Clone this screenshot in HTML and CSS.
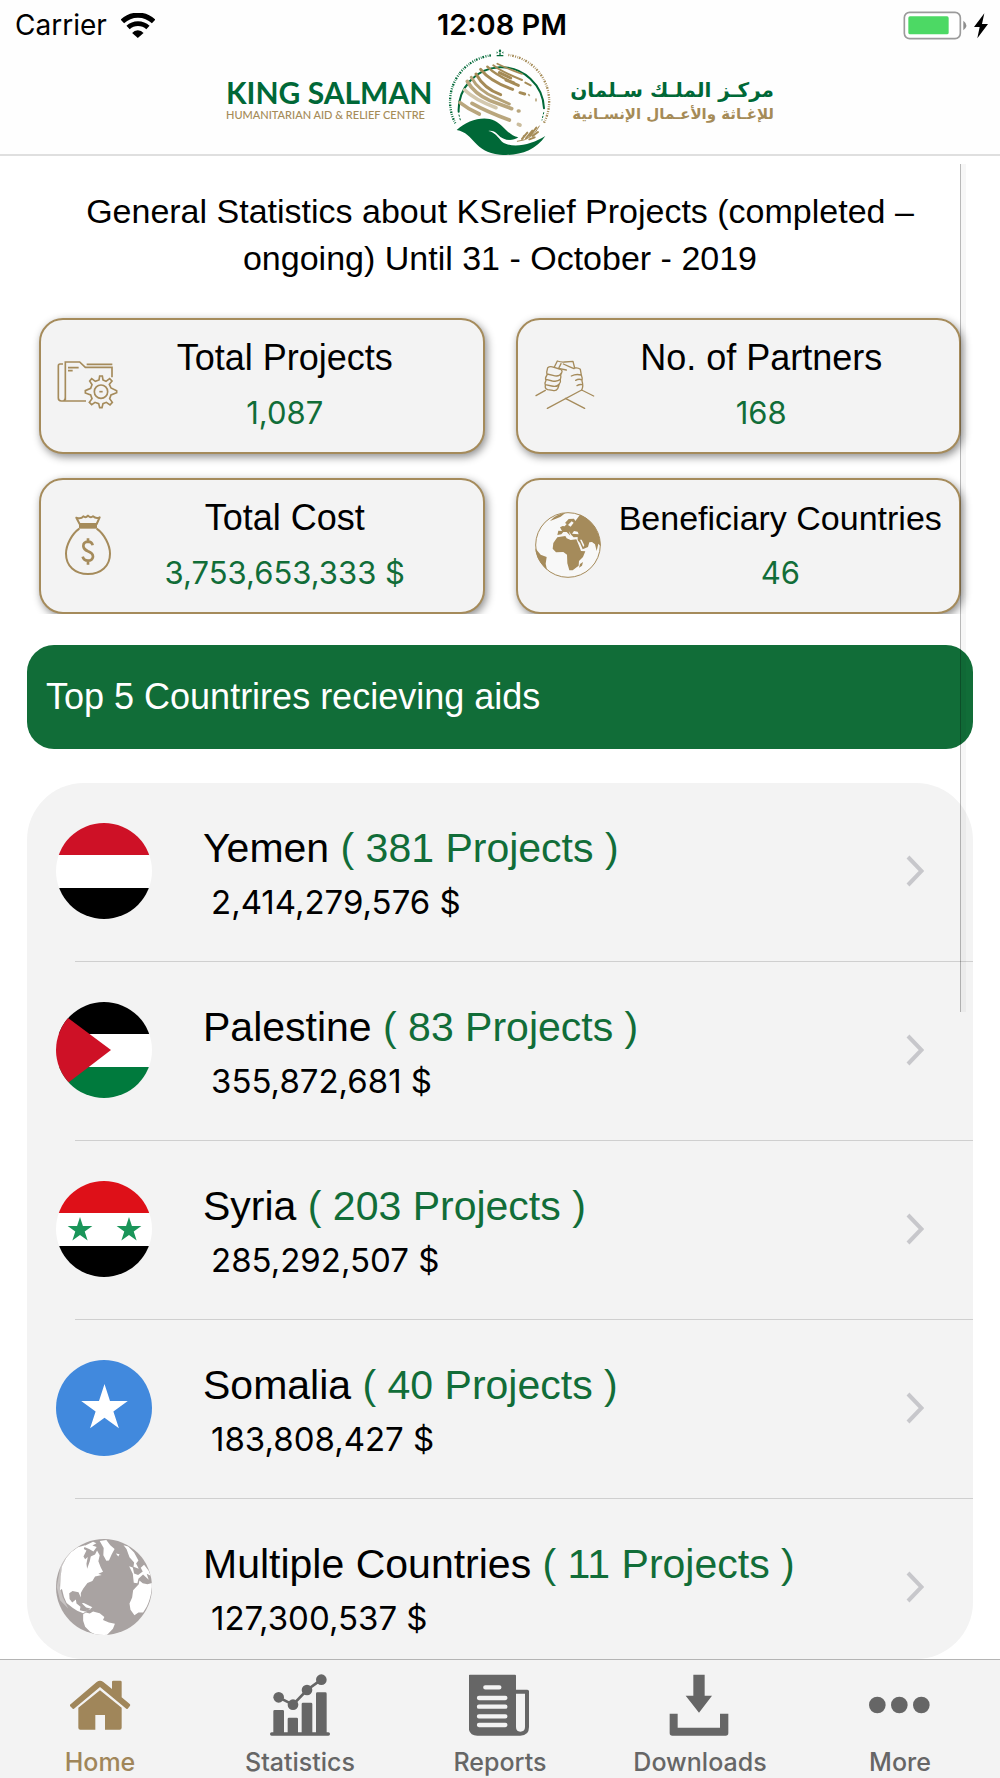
FILE: index.html
```html
<!DOCTYPE html>
<html lang="en">
<head>
<meta charset="utf-8">
<meta name="viewport" content="width=device-width, initial-scale=1">
<title>KSrelief Statistics</title>
<link rel="stylesheet" href="styles.css">
</head>
<body>
<svg class="defs" aria-hidden="true">
  <symbol id="star" viewBox="-10 -10 20 20"><path d="M0-10 2.25-3.09 9.51-3.09 3.63 1.18 5.88 8.09 0 3.82-5.88 8.09-3.63 1.18-9.51-3.09-2.25-3.09Z"/></symbol>
  <symbol id="chevron" viewBox="0 0 18 32"><path d="M2 2 15.500 16 2 30" fill="none" stroke="#c7c7cb" stroke-width="4"/></symbol>
</svg>
<div class="app">
  <header class="header">
    <div class="status">
      <div class="status-left">
        <span>Carrier</span>
        <svg width="34" height="25" viewBox="363 35 101 74">
          <path d="M367 60A67 67 0 0 1 460 60" fill="none" stroke="#000" stroke-width="15"/>
          <path d="M384 78A43 43 0 0 1 443 78" fill="none" stroke="#000" stroke-width="14"/>
          <path d="M413 109 396 94A22 22 0 0 1 430 94Z"/>
        </svg>
      </div>
      <div class="status-time">12:08 PM</div>
      <div class="status-right">
        <svg width="86" height="29" viewBox="1208 29 258 87">
          <rect x="1212" y="33" width="168" height="79" rx="16" fill="#fff" stroke="#9b9b9b" stroke-width="5"/>
          <rect x="1224" y="45" width="121" height="54" rx="5" fill="#4cd964"/>
          <path d="M1389 58Q1407 72 1389 87Z" fill="#8e8e8e"/>
          <path d="M1452 36 1421 77 1438 77 1431 111 1463 68 1445 68Z"/>
        </svg>
      </div>
    </div>
    <div class="brand">
      <div class="brand-text">
        <div class="brand-name">KING SALMAN</div>
        <div class="brand-sub">HUMANITARIAN AID &amp; RELIEF CENTRE</div>
      </div>
      <svg class="emblem" viewBox="30 24 300 318">
        <g fill="none" stroke-linecap="round">
          <path d="M46 250A140 140 0 0 1 156 46" stroke="#006837" stroke-width="7" stroke-dasharray="3 4 2 3 5 4" stroke-linecap="butt"/>
          <path d="M205 45A140 140 0 0 1 312 248" stroke="#a58b57" stroke-width="7" stroke-dasharray="3 4 2 3 5 4" stroke-linecap="butt"/>
          <path d="M56 215A128 128 0 0 1 312 205" stroke="#006837" stroke-width="6"/>
          <path d="M57 225 61 240M311 218 306 240" stroke="#006837" stroke-width="3" stroke-dasharray="4 7"/>
          <g stroke="#a58b57" stroke-width="9">
            <path d="M122 88Q150 124 218 148M240 158 254 162"/>
            <path d="M142 80Q170 108 222 128" stroke-width="7"/>
            <path d="M160 76Q185 96 246 120M256 128 272 136" stroke-width="6"/>
            <path d="M172 71Q205 87 246 102" stroke-width="5"/>
            <path d="M108 102Q132 146 182 164"/>
            <path d="M94 112Q115 152 168 174L208 192" stroke="#b5a277"/>
            <path d="M178 98 212 114M198 120 235 136"/>
          </g>
          <g stroke="#b9a67d" stroke-width="11">
            <path d="M82 124Q102 160 150 182L215 206M235 213 237 213"/>
            <path d="M74 150Q105 180 168 203" stroke="#d3c8ae"/>
            <path d="M96 190Q140 215 208 240"/>
            <path d="M60 188Q85 208 118 222"/>
            <path d="M235 253 240 255" stroke="#cbbd9e"/>
            <path d="M266 164 268 166M288 177 288 182" stroke-width="5"/>
          </g>
          <path d="M232 304Q278 300 298 258" stroke="#a58b57" stroke-width="3"/>
          <path d="M246 297 262 278M258 295 277 272M270 288 289 263M257 284 251 289M278 288 294 276M268 298 284 292" stroke="#a58b57" stroke-width="6"/>
        </g>
        <path d="M50 270C82 240 132 226 164 242 191 256 205 286 235 292 214 306 188 300 174 284 163 272 152 271 145 273 164 276 174 292 186 305 218 328 276 313 316 288 286 334 230 349 180 344 100 337 105 280 50 270Z" fill="#006837"/>
        <path d="M180 27 184 33 180 39 176 33ZM178 39H182V46H178ZM170 45 190 45 190 49 170 49ZM170 34 174 38 170 41ZM190 34 186 38 190 41Z" fill="#006837"/>
      </svg>
      <div class="brand-text" lang="ar" dir="rtl">
        <div class="brand-name-ar">مركـز الملـك سـلمان</div>
        <div class="brand-sub-ar">للإغـاثة والأعـمال الإنسـانية</div>
      </div>
    </div>
  </header>

  <main class="content">
    <h1 class="title">General Statistics about KSrelief Projects (completed – ongoing) Until 31 - October - 2019</h1>

    <section class="stats">
      <div class="stat">
        <div class="stat-icon">
          <svg width="62" height="50" viewBox="85 158 186 150" fill="none" stroke="#a58b5b" stroke-width="5">
            <path d="M103 170H94Q89 170 89 176V272Q89 281 98 281H172M110 278V164H153L170 180H250V210M174 171H251M118 181H150M118 190H132M110 270Q110 280 104 281"/>
            <path d="M211 218 213 206H221L223 218 232 222 243 214 250 221 242 231 247 242 264 250V256L247 263 243 274 251 285 244 293 233 285 223 289 220 301H213L210 289 199 285 189 292 182 285 190 274 186 263 170 257V250L186 243 190 232 183 221 189 214 200 222Z"/>
            <circle cx="217" cy="253" r="20"/><path d="M212 253H222"/>
          </svg>
        </div>
        <div class="stat-text"><div class="stat-label">Total Projects</div><div class="stat-value">1,087</div></div>
      </div>
      <div class="stat">
        <div class="stat-icon">
          <svg width="60" height="52" viewBox="111 150 180 156" fill="none" stroke="#a58b5b" stroke-width="4" stroke-linecap="round" stroke-linejoin="round">
            <path d="M114 260 142 244M148 298 251 243 287 261M202 268 260 298"/>
            <path d="M149 176Q156 170 168 175L185 180Q195 184 191 191L188 198Q190 206 187 211 189 219 184 224 182 233 179 239 174 247 164 244L149 242Q140 239 142 229 139 222 144 214 140 207 147 198 145 188 149 176ZM147 195 165 199Q184 205 190 192M144 211 163 216Q179 219 187 211M142 227 161 231Q177 235 184 225"/>
            <path d="M169 174 178 156Q188 160 200 159L225 157 230 177Q240 175 247 181L250 198Q254 207 252 216 257 231 251 243M189 164 182 178 205 183M196 165 212 172 228 179M220 201Q234 194 249 198M233 214Q243 208 252 213M237 230Q245 225 253 227"/>
          </svg>
        </div>
        <div class="stat-text"><div class="stat-label">No. of Partners</div><div class="stat-value">168</div></div>
      </div>
      <div class="stat">
        <div class="stat-icon">
          <svg width="48" height="62" viewBox="99 612 144 186" fill="none" stroke="#a58b5b" stroke-width="6" stroke-linejoin="round">
            <path d="M146 642 136 623Q150 628 157 619 164 625 171 617 179 625 186 619 195 627 206 622L197 642Z"/>
            <path d="M144 650H198" stroke-width="12"/>
            <path d="M145 656C122 672 105 706 105 731 105 768 132 792 171 792S237 768 237 731C237 706 220 672 197 656"/>
            <path d="M185 706Q183 695 171 695 157 696 157 708 158 718 171 724 186 730 186 740 184 752 171 752 158 752 155 740M171 685V696M171 751V764" stroke-width="8"/>
          </svg>
        </div>
        <div class="stat-text"><div class="stat-label">Total Cost</div><div class="stat-value">3,753,653,333 $</div></div>
      </div>
      <div class="stat stat-wide">
        <div class="stat-icon">
          <svg width="66" height="66" viewBox="105 607 198 198" fill="#a58b5b">
            <circle cx="204" cy="706" r="97" fill="#f8f8f8" stroke="#a58b5b" stroke-width="3"/>
            <path d="M160 700 172 683 196 679 200 686 212 691 229 689 237 708 243 724 256 725 249 742 237 754 236 768 218 782 208 782 202 761 201 735 190 727 168 728 158 717Z"/>
            <path d="M172 676 175 663 186 664 180 653 188 649 194 650 200 643 195 640 206 628 222 627 226 634 240 615C270 627 301 660 302 710L295 702 290 724 285 704 276 697 268 698 264 712 248 719 240 700 233 692 233 682 221 683 214 676 206 664 211 678 200 667 190 667 184 674Z"/>
            <path d="M204 646 212 651 221 639 215 635ZM216 672 236 674 233 666 222 664ZM240 690 250 712 253 707 245 690Z" fill="#f8f8f8"/>
            <path d="M106 716 122 735 140 742 137 762 141 780C120 762 107 740 106 716ZM150 634C165 618 180 612 196 610L182 621 166 628ZM237 774 240 763 249 757 246 768Z"/>
          </svg>
        </div>
        <div class="stat-text"><div class="stat-label">Beneficiary Countries</div><div class="stat-value">46</div></div>
      </div>
    </section>

    <h2 class="banner">Top 5 Countrires recieving aids</h2>

    <ul class="countries">
      <li><a class="country" href="#yemen">
        <svg class="flag" viewBox="0 0 96 96"><path d="M0 0H96V32H0Z" fill="#ce1126"/><path d="M0 32H96V65H0Z" fill="#fff"/><path d="M0 65H96V96H0Z"/></svg>
        <div class="country-text"><div class="country-name">Yemen <span>( 381 Projects )</span></div><div class="country-amount">2,414,279,576 $</div></div>
        <svg class="chevron"><use href="#chevron"/></svg></a></li>
      <li><a class="country" href="#palestine">
        <svg class="flag" viewBox="0 0 96 96"><path d="M0 0H96V32H0Z"/><path d="M0 32H96V65H0Z" fill="#fff"/><path d="M0 65H96V96H0Z" fill="#007a3d"/><path d="M-10 0 0 7 55 48 0 90Z" fill="#ce1126"/></svg>
        <div class="country-text"><div class="country-name">Palestine <span>( 83 Projects )</span></div><div class="country-amount">355,872,681 $</div></div>
        <svg class="chevron"><use href="#chevron"/></svg></a></li>
      <li><a class="country" href="#syria">
        <svg class="flag" viewBox="0 0 96 96"><path d="M0 0H96V32H0Z" fill="#de1018"/><path d="M0 32H96V65H0Z" fill="#fff"/><path d="M0 65H96V96H0Z"/><g fill="#1a9559"><use href="#star" x="11" y="36" width="26" height="26"/><use href="#star" x="60" y="36" width="26" height="26"/></g></svg>
        <div class="country-text"><div class="country-name">Syria <span>( 203 Projects )</span></div><div class="country-amount">285,292,507 $</div></div>
        <svg class="chevron"><use href="#chevron"/></svg></a></li>
      <li><a class="country" href="#somalia">
        <svg class="flag" viewBox="0 0 96 96"><path d="M0 0H96V96H0Z" fill="#4189dd"/><use href="#star" x="24" y="24" width="49" height="49" fill="#fff"/></svg>
        <div class="country-text"><div class="country-name">Somalia <span>( 40 Projects )</span></div><div class="country-amount">183,808,427 $</div></div>
        <svg class="chevron"><use href="#chevron"/></svg></a></li>
      <li><a class="country" href="#multiple">
        <svg class="flag" viewBox="108 1135 290 290"><path d="M108 1135H398V1425H108Z" fill="#a9a3a2"/>
          <g fill="#fff">
            <path d="M154 1174 174 1160 196 1154 192 1165 200 1170 191 1188 196 1196 204 1189 200 1210 202 1225 210 1202 213 1188 226 1182 232 1170 240 1184 236 1202 243 1220 250 1234 236 1240 246 1244 226 1248 218 1262 203 1268 190 1285 183 1298 183 1312 176 1296 158 1292 148 1299 149 1316 157 1327 168 1318 170 1330 182 1340 180 1350 196 1354 215 1346 199 1342 186 1329 192 1328 218 1341 208 1348 190 1359 172 1352 158 1343 140 1328 132 1310 126 1286 120 1290 122 1248 126 1218 139 1192Z"/>
            <path d="M240 1141 260 1138 272 1154 285 1165 276 1182 268 1200 260 1201 251 1184 252 1162ZM190 1158 220 1143 230 1148 218 1155 231 1159 221 1173 208 1165ZM289 1179 300 1181 296 1188Z"/>
            <path d="M190 1362 198 1357 210 1360 220 1354 240 1359 254 1371 250 1380 268 1387 286 1391 280 1406 262 1425H230L212 1416 196 1400 190 1382Z"/>
            <path d="M398 1268C398 1303 388 1335 371 1357L357 1357 345 1365 333 1349 330 1330 338 1312 341 1290 358 1272 360 1260 370 1269 384 1272Z"/>
            <path d="M312 1154 326 1158 344 1176 357 1200 350 1209 358 1225 342 1219 344 1206 330 1190 321 1165ZM329 1217 340 1221 344 1239 356 1244 370 1233 364 1222 374 1213 388 1231 394 1246 382 1240 388 1258 371 1242 357 1255 354 1269 343 1267 340 1240Z"/>
            <path d="M122 1215 139 1189 124 1230 119 1276 128 1310 145 1345 120 1320 110 1280Z" opacity=".35"/>
          </g></svg>
        <div class="country-text"><div class="country-name">Multiple Countries <span>( 11 Projects )</span></div><div class="country-amount">127,300,537 $</div></div>
        <svg class="chevron"><use href="#chevron"/></svg></a></li>
    </ul>
    <div class="scroll-indicator"></div>
  </main>

  <nav class="tabs">
    <a class="tab tab-active" href="#home">
      <svg viewBox="208 73 186 186" fill="currentColor"><path d="M211 165 291 97Q301 89 311 97L337 118V97Q337 93 341 93H362Q366 93 366 97V143L391 164Q393 167 390 170L384 177Q381 179 378 176L301 112 223 177Q220 179 217 175L211 169Z"/><path d="M236 174 301 122 366 174V234Q366 240 360 240H316V196H287V240H242Q236 240 236 234Z"/></svg>
      <span>Home</span></a>
    <a class="tab" href="#statistics">
      <svg viewBox="807 73 186 186" fill="currentColor"><rect x="810" y="248" width="180" height="10" rx="5"/><path d="M820 250V185Q820 181 824 181H848Q852 181 852 185V250ZM863 250V208Q863 204 867 204H890Q894 204 894 208V250ZM905 250V163Q905 159 909 159H933Q937 159 937 163V250ZM948 250V132Q948 128 952 128H976Q980 128 980 132V250Z"/><path d="M836 143 879 165 921 121 964 90" fill="none" stroke="currentColor" stroke-width="8"/><circle cx="836" cy="143" r="16"/><circle cx="879" cy="165" r="16"/><circle cx="921" cy="121" r="16"/><circle cx="964" cy="90" r="16"/></svg>
      <span>Statistics</span></a>
    <a class="tab" href="#reports">
      <svg viewBox="1407 73 186 186" fill="currentColor"><path fill-rule="evenodd" d="M1410 75H1545Q1548 75 1548 78V120H1582Q1587 120 1587 125V232Q1587 258 1561 258H1432Q1406 258 1406 232V79Q1406 75 1410 75ZM1548 132V232Q1548 246 1561 246 1575 246 1575 232V132Z"/><path d="M1456 113H1498M1437 145H1516M1437 171H1516M1437 200H1516M1437 226H1516" stroke="#f3f3f3" stroke-width="13" stroke-linecap="round"/></svg>
      <span>Reports</span></a>
    <a class="tab" href="#downloads">
      <svg viewBox="508 73 186 186" fill="currentColor"><path d="M581 75H615V138H637L598 189 558 138H581ZM510 192H534V234H661V192H686V250Q686 258 678 258H518Q510 258 510 250Z"/></svg>
      <span>Downloads</span></a>
    <a class="tab" href="#more">
      <svg viewBox="1106 73 186 186" fill="currentColor"><circle cx="1131" cy="166" r="25"/><circle cx="1197" cy="166" r="25"/><circle cx="1263" cy="166" r="25"/></svg>
      <span>More</span></a>
  </nav>
</div>
</body>
</html>
```
FILE: styles.css
```css
* {
  box-sizing: border-box;
}

body {
  margin: 0;
  background: #fff;
  color: #000;
  font-family: "Liberation Sans", Arial, sans-serif;
}

svg {
  display: block;
  flex: none;
}

a {
  color: inherit;
  text-decoration: none;
}

.defs {
  display: none;
}

.app {
  display: flex;
  flex-direction: column;
  height: 100vh;
}

/* Header */
.header {
  flex: none;
  background: #fefefe;
  border-bottom: 2px solid #dfdfdf;
}

.status {
  display: grid;
  grid-template-columns: 1fr auto 1fr;
  align-items: center;
  height: 48px;
  padding: 2px 11px 0 15px;
  font-family: Inter, sans-serif;
  font-size: 28px;
  line-height: 32px;
}

.status-left {
  display: flex;
  align-items: center;
  gap: 14px;
}

.status-time {
  font-size: 29px;
  font-weight: 600;
}

.status-right {
  justify-self: end;
}

.brand {
  display: flex;
  justify-content: center;
  gap: 24px;
}

.brand-text {
  display: flex;
  flex-direction: column;
  width: 200px;
  padding-top: 28px;
  white-space: nowrap;
}

.brand-name,
.brand-sub {
  font-family: Lato, sans-serif;
}

.brand-name {
  color: #006837;
  font-size: 30px;
  font-weight: 700;
  line-height: 32px;
}

.brand-sub {
  color: #a58b57;
  font-size: 11px;
  font-weight: 500;
  line-height: 14px;
}

.brand-name-ar,
.brand-sub-ar {
  font-family: "DejaVu Sans", sans-serif;
  font-weight: 700;
}

.brand-name-ar {
  color: #006837;
  font-size: 20px;
  line-height: 28px;
}

.brand-sub-ar {
  color: #a58b57;
  font-size: 15px;
  line-height: 20px;
}

.emblem {
  width: 100px;
  height: 106px;
  overflow: visible;
}

/* Content */
.content {
  position: relative;
  display: flex;
  flex: 1;
  flex-direction: column;
  min-height: 0;
  padding: 32px 27px 0;
  overflow: hidden;
}

.title {
  margin: 0 40px;
  font-size: 34px;
  font-weight: 400;
  line-height: 47px;
  text-align: center;
}

.stats {
  display: grid;
  flex: none;
  grid-template-columns: repeat(2, minmax(0, 1fr));
  gap: 24px 31px;
  margin-top: 30px;
  padding: 6px 12px 0;
  overflow: hidden;
}

.stat {
  display: flex;
  align-items: center;
  height: 136px;
  padding: 0 34px 2px 0;
  background: #f3f3f3;
  border: 2px solid #a58b5b;
  border-radius: 24px;
  box-shadow: 2px 3px 8px rgba(0, 0, 0, 0.45);
}

.stat-icon {
  display: flex;
  flex: none;
  justify-content: center;
  width: 80px;
  padding-left: 14px;
}

.stat-text {
  flex: 1;
  text-align: center;
  white-space: nowrap;
}

.stat-label {
  font-size: 36px;
  line-height: 56px;
}

.stat-value {
  color: #116d38;
  font-family: Inter, sans-serif;
  font-size: 31px;
  line-height: 54px;
}

.stat-wide {
  padding-right: 16px;
}

.stat-wide .stat-icon {
  width: 100px;
  padding: 0;
}

.stat-wide .stat-label {
  font-size: 34px;
}

.banner {
  flex: none;
  margin: 31px 0 0;
  padding: 28px 19px;
  background: #116d38;
  border-radius: 27px;
  color: #fff;
  font-size: 36px;
  font-weight: 400;
  line-height: 48px;
}

.countries {
  flex: 1;
  min-height: 0;
  margin: 34px 0 0;
  padding: 0;
  overflow: hidden;
  background: #f3f3f3;
  border-radius: 57px;
  list-style: none;
}

.countries li + li::before {
  display: block;
  height: 1px;
  margin-left: 48px;
  background: #cfcfcf;
  content: "";
}

.country {
  display: flex;
  align-items: center;
  height: 178px;
  padding: 0 49px 2px 29px;
}

.flag {
  width: 96px;
  height: 96px;
  border-radius: 50%;
}

.country-text {
  flex: 1;
  padding-top: 8px;
  padding-left: 51px;
}

.country-name {
  font-size: 41px;
  line-height: 54px;
}

.country-name span {
  color: #116d38;
}

.country-amount {
  padding-left: 8px;
  font-family: Inter, sans-serif;
  font-size: 33px;
  line-height: 54px;
}

.chevron {
  width: 18px;
  height: 32px;
}

.scroll-indicator {
  position: absolute;
  top: 8px;
  right: 34px;
  width: 6px;
  height: 848px;
  background: rgba(0, 0, 0, 0.03);
  border-left: 1px solid rgba(0, 0, 0, 0.25);
}

/* Tab bar */
.tabs {
  display: grid;
  flex: none;
  grid-template-columns: repeat(5, 1fr);
  height: 119px;
  background: #f3f3f3;
  border-top: 1px solid #b4b4b4;
}

.tab {
  display: flex;
  flex-direction: column;
  align-items: center;
  padding-top: 14px;
  color: #666;
  font-family: Inter, sans-serif;
  font-size: 25px;
  font-weight: 500;
  line-height: 32px;
}

.tab svg {
  width: 62px;
  height: 62px;
  margin-bottom: 10px;
}

.tab-active {
  color: #a0865a;
}
```
